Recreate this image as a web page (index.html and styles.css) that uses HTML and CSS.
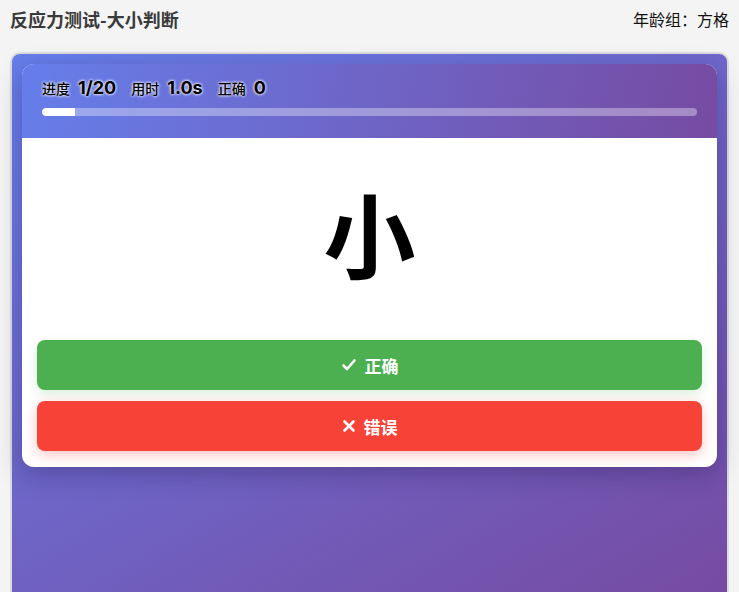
FILE: index.html
```html
<!DOCTYPE html>
<html lang="zh">
<head>
<meta charset="utf-8">
<link rel="stylesheet" href="styles.css">
</head>
<body>
<header class="top">
  <h1 class="title">反应力测试-大小判断</h1>
  <div class="age">年龄组：方格</div>
</header>
<main class="panel">
  <section class="card">
    <div class="stats">
      <div class="row">
        <span class="lbl">进度</span><span class="val">1/20</span>
        <span class="lbl">用时</span><span class="val">1.0s</span>
        <span class="lbl">正确</span><span class="val">0</span>
      </div>
      <div class="bar"><div class="fill" style="width:5%"></div></div>
    </div>
    <div class="word">小</div>
    <div class="btns">
      <button class="btn ok"><svg width="16" height="16" viewBox="0 0 16 16"><path d="M2.5 8.5 L6 12 L13.5 3.5" fill="none" stroke="#fff" stroke-width="2.6" stroke-linecap="round" stroke-linejoin="round"/></svg>正确</button>
      <button class="btn no"><svg width="14" height="14" viewBox="0 0 14 14"><path d="M2.5 2.5 L11.5 11.5 M11.5 2.5 L2.5 11.5" fill="none" stroke="#fff" stroke-width="2.6" stroke-linecap="round"/></svg>错误</button>
    </div>
  </section>
</main>
</body>
</html>
```
FILE: styles.css
```css
* { box-sizing: border-box; }
html, body { margin: 0; height: 100%; }
body {
  background: #f4f4f4;
  font-family: "Noto Sans CJK SC", "Noto Sans", sans-serif;
  color: #222;
  padding: 0 10px;
  overflow: hidden;
}
.top {
  display: flex;
  justify-content: space-between;
  align-items: center;
  height: 38px;
  margin-bottom: 14px;
}
.title {
  margin: 0;
  font-size: 18px;
  font-weight: 700;
  color: #3a3a3a;
}
.age {
  font-size: 16px;
  color: #111;
}
.panel {
  border: 2px solid #dcdcdc;
  border-bottom: none;
  border-radius: 10px 10px 0 0;
  background: linear-gradient(150deg, #667eea 0%, #764ba2 100%);
  padding: 10px;
  height: calc(100vh - 52px);
}
.card {
  background: #fff;
  border-radius: 12px;
  overflow: hidden;
  box-shadow: 0 8px 24px rgba(40, 30, 90, 0.35);
  padding-bottom: 16px;
}
.stats {
  background: linear-gradient(100deg, #667eea 0%, #764ba2 100%);
  padding: 13px 20px 22px;
}
.row {
  display: flex;
  align-items: baseline;
  height: 22px;
  color: #000;
  text-shadow: 0 0 3px #fff, 0 0 3px #fff;
}
.lbl { font-size: 14px; font-weight: 500; margin-right: 8px; }
.val { font-family: "Inter", "Noto Sans", sans-serif; font-size: 18px; font-weight: 700; margin-right: 15px; }
.bar {
  margin-top: 9px;
  height: 8px;
  border-radius: 4px;
  background: rgba(255,255,255,0.35);
  overflow: hidden;
}
.fill { height: 100%; background: #fff; border-radius: 4px 0 0 4px; }
.word {
  height: 202px;
  display: flex;
  align-items: center;
  justify-content: center;
  font-size: 92px;
  font-weight: 700;
  color: #000;
  line-height: 1;
  padding-bottom: 14px;
}
.btns {
  display: flex;
  flex-direction: column;
  gap: 11px;
  padding: 0 15px;
}
.btn {
  height: 50px;
  border: none;
  border-radius: 8px;
  color: #fff;
  font-family: "Noto Sans CJK SC", sans-serif;
  font-size: 17px;
  font-weight: 700;
  display: flex;
  align-items: center;
  justify-content: center;
  gap: 8px;
}
.ok { background: #4caf50; box-shadow: 0 4px 12px rgba(76,175,80,0.2); }
.no { background: #f74337; box-shadow: 0 4px 14px rgba(247,67,55,0.3); }
```
